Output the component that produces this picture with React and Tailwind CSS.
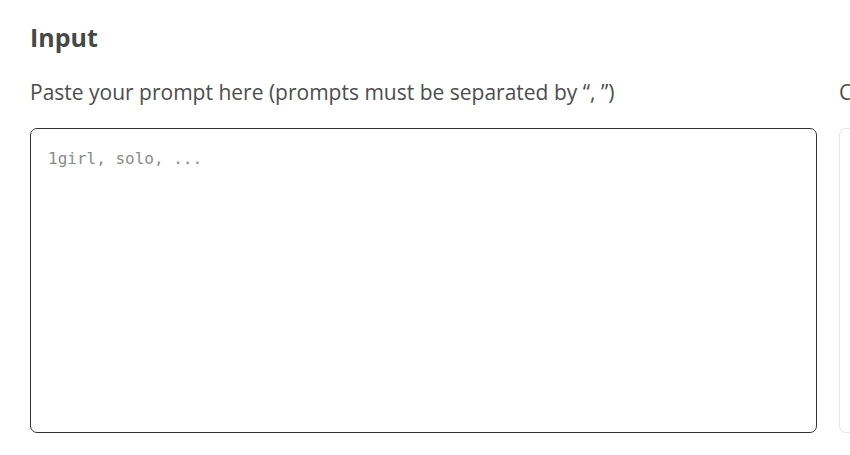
import React, { useState } from 'react';

const Column = ({ label, placeholder, active, value, setValue }) => (
  <div className="w-[787px] shrink-0 flex flex-col">
    <p className="text-[21px] leading-[28px] text-[#4d4d4d] whitespace-nowrap">{label}</p>
    <textarea
      autoFocus={active}
      value={value}
      onChange={(e) => setValue(e.target.value)}
      placeholder={placeholder}
      className={`mt-[22px] h-[305px] w-full resize-none rounded-[7px] border px-[17px] py-[18px] text-[16px] leading-[24px] text-[#333] outline-none placeholder:text-[#8a8a8a] ${active ? 'border-[#333333]' : 'border-[#e6e6e6]'}`}
      style={{ fontFamily: '"DejaVu Sans Mono", monospace' }}
    />
  </div>
);

export default function App() {
  const [input, setInput] = useState('');
  const [output, setOutput] = useState('');

  return (
    <div
      className="w-[850px] h-[455px] overflow-hidden bg-white pl-[30px] flex flex-col"
      style={{ fontFamily: '"Open Sans", "Noto Sans", sans-serif' }}
    >
      <h2 className="text-[25px] leading-[34px] font-bold text-[#474747] mt-[20px]">Input</h2>
      <div className="flex gap-[22px] mt-[24px]">
        <Column
          label="Paste your prompt here (prompts must be separated by “, ”)"
          placeholder="1girl, solo, ..."
          active
          value={input}
          setValue={setInput}
        />
        <Column
          label="Converted prompt"
          placeholder=""
          value={output}
          setValue={setOutput}
        />
      </div>
    </div>
  );
}
